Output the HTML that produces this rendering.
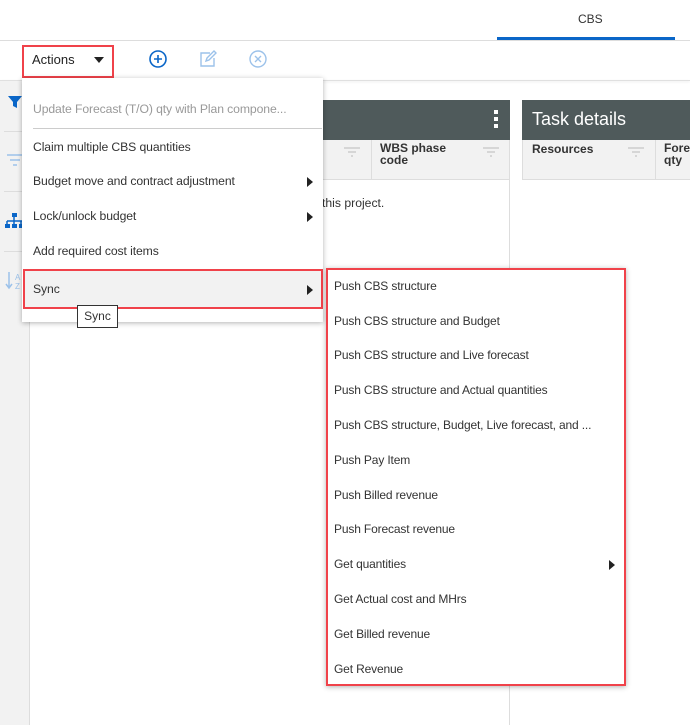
<!DOCTYPE html><html><head><style>
body{margin:0;width:690px;height:725px;overflow:hidden;background:#fff;font-family:"Liberation Sans",sans-serif;font-size:12px;color:#333;position:relative}
.a{position:absolute}
.mi{position:absolute;left:11px;font-size:12.2px;color:#333;letter-spacing:-0.1px}
.si{position:absolute;left:6px;font-size:12px;color:#333;letter-spacing:-0.15px}
.tri{position:absolute;width:0;height:0;border-top:5px solid transparent;border-bottom:5px solid transparent;border-left:6px solid #222}
</style></head><body>
<div class="a" style="left:0;top:40px;width:690px;height:1px;background:#ddd"></div>
<div class="a" style="left:578px;top:12px;font-size:12px">CBS</div>
<div class="a" style="left:497px;top:37px;width:178px;height:3px;background:#0a66c8"></div>
<div class="a" style="left:0;top:80px;width:690px;height:1px;background:#e0e0e0;box-shadow:0 1px 2px rgba(0,0,0,.1)"></div>
<div class="a" style="left:22px;top:45px;width:88px;height:29px;border:2px solid #f0424a"></div>
<div class="a" style="left:32px;top:52px;font-size:13px;color:#222">Actions</div>
<div class="a" style="left:94px;top:57px;border-left:5px solid transparent;border-right:5px solid transparent;border-top:6px solid #222"></div>
<svg class="a" style="left:148px;top:49px" width="20" height="20"><circle cx="10" cy="10" r="8" fill="none" stroke="#0a66c8" stroke-width="1.6"/><path d="M10 6v8M6 10h8" stroke="#0a66c8" stroke-width="1.6"/></svg>
<svg class="a" style="left:198px;top:49px" width="20" height="20"><path d="M12 4H3v13h13V9" fill="none" stroke="#9cc2ea" stroke-width="1.4"/><path d="M8 12l1-3 7-7 2 2-7 7z" fill="none" stroke="#9cc2ea" stroke-width="1.4"/></svg>
<svg class="a" style="left:248px;top:49px" width="20" height="20"><circle cx="10" cy="10" r="8" fill="none" stroke="#9cc2ea" stroke-width="1.4"/><path d="M7 7l6 6M13 7l-6 6" stroke="#9cc2ea" stroke-width="1.4"/></svg>
<div class="a" style="left:0;top:81px;width:29px;height:644px;background:#f2f2f2;border-right:1px solid #ddd"></div>
<svg class="a" style="left:7px;top:94px" width="16" height="16"><path d="M1 2h14l-5 6v6l-4-2V8z" fill="#0a66c8"/></svg>
<div class="a" style="left:4px;top:131px;width:22px;height:1px;background:#ddd"></div>
<svg class="a" style="left:5px;top:152px" width="20" height="16"><path d="M2 3h16M5 8h10M8 13h4" stroke="#9cc2ea" stroke-width="1.5"/></svg>
<div class="a" style="left:4px;top:191px;width:22px;height:1px;background:#ddd"></div>
<svg class="a" style="left:4px;top:212px" width="20" height="18"><rect x="8" y="1" width="5" height="4" fill="#0a66c8"/><path d="M10 5v4M3 9h15M3 9v3M10 9v3M17 9v3" stroke="#0a66c8" stroke-width="1.5" fill="none"/><rect x="1" y="12" width="5" height="4" fill="#0a66c8"/><rect x="8" y="12" width="5" height="4" fill="#0a66c8"/><rect x="15" y="12" width="4" height="4" fill="#0a66c8"/></svg>
<div class="a" style="left:4px;top:251px;width:22px;height:1px;background:#ddd"></div>
<svg class="a" style="left:4px;top:270px" width="22" height="22"><path d="M5 2v16M2 14l3 4 3-4" stroke="#9cc2ea" stroke-width="1.5" fill="none"/><text x="11" y="10" font-size="8" fill="#9cc2ea" font-family="Liberation Sans">A</text><text x="11" y="19" font-size="8" fill="#9cc2ea" font-family="Liberation Sans">Z</text></svg>
<div class="a" style="left:30px;top:100px;width:480px;height:40px;background:#4f5a5b"></div>
<div class="a" style="left:494px;top:110px;width:4px;height:4px;background:#fff;box-shadow:0 7px 0 #fff,0 14px 0 #fff"></div>
<div class="a" style="left:30px;top:140px;width:479px;height:39px;background:#f2f2f2;border-bottom:1px solid #ddd;border-right:1px solid #ddd"></div>
<div class="a" style="left:371px;top:140px;width:1px;height:40px;background:#ddd"></div>
<div class="a" style="left:380px;top:142px;font-weight:bold;font-size:12px;line-height:12px">WBS phase<br>code</div>
<svg class="a" style="left:343px;top:146px" width="18" height="12"><path d="M1 2h16M5 6h8M8 10h2" stroke="#ccc" stroke-width="1.5"/></svg>
<svg class="a" style="left:482px;top:146px" width="18" height="12"><path d="M1 2h16M5 6h8M8 10h2" stroke="#ccc" stroke-width="1.5"/></svg>
<div class="a" style="left:322px;top:196px;font-size:12.2px">this project.</div>
<div class="a" style="left:509px;top:180px;width:1px;height:545px;background:#ddd"></div>
<div class="a" style="left:522px;top:100px;width:168px;height:40px;background:#4f5a5b"></div>
<div class="a" style="left:532px;top:109px;color:#fff;font-size:18px">Task details</div>
<div class="a" style="left:522px;top:140px;width:168px;height:39px;background:#f2f2f2;border-bottom:1px solid #ddd;border-left:1px solid #ddd"></div>
<div class="a" style="left:655px;top:140px;width:1px;height:40px;background:#ddd"></div>
<div class="a" style="left:532px;top:142px;font-weight:bold;font-size:12px">Resources</div>
<div class="a" style="left:664px;top:142px;font-weight:bold;font-size:12px;line-height:12px;width:26px;overflow:hidden;white-space:nowrap">Forec<br>qty</div>
<svg class="a" style="left:627px;top:146px" width="18" height="12"><path d="M1 2h16M5 6h8M8 10h2" stroke="#ccc" stroke-width="1.5"/></svg>
<div class="a" style="left:22px;top:78px;width:301px;height:244px;background:#fff;box-shadow:0 1px 5px rgba(0,0,0,.3)">
<div class="mi" style="top:24px;color:#999">Update Forecast (T/O) qty with Plan compone...</div>
<div class="a" style="left:11px;top:50px;width:289px;height:1px;background:#ccc"></div>
<div class="mi" style="top:62px">Claim multiple CBS quantities</div>
<div class="mi" style="top:96px">Budget move and contract adjustment</div><div class="tri" style="left:285px;top:99px"></div>
<div class="mi" style="top:131px">Lock/unlock budget</div><div class="tri" style="left:285px;top:134px"></div>
<div class="mi" style="top:166px">Add required cost items</div>
<div class="a" style="left:1px;top:191px;width:296px;height:36px;background:#f2f2f2;border:2px solid #f0424a"></div>
<div class="mi" style="top:204px">Sync</div><div class="tri" style="left:285px;top:207px"></div>
</div>
<div class="a" style="left:77px;top:305px;width:39px;height:21px;border:1px solid #333;background:#fff;font-size:12px;text-align:center;line-height:21px">Sync</div>
<div class="a" style="left:326px;top:268px;width:296px;height:414px;background:#fff;border:2px solid #f0424a;box-shadow:0 1px 5px rgba(0,0,0,.3)">
<div class="si" style="top:9px">Push CBS structure</div>
<div class="si" style="top:44px">Push CBS structure and Budget</div>
<div class="si" style="top:78px">Push CBS structure and Live forecast</div>
<div class="si" style="top:113px">Push CBS structure and Actual quantities</div>
<div class="si" style="top:148px">Push CBS structure, Budget, Live forecast, and ...</div>
<div class="si" style="top:183px">Push Pay Item</div>
<div class="si" style="top:218px">Push Billed revenue</div>
<div class="si" style="top:252px">Push Forecast revenue</div>
<div class="si" style="top:287px">Get quantities</div><div class="tri" style="left:281px;top:290px"></div>
<div class="si" style="top:322px">Get Actual cost and MHrs</div>
<div class="si" style="top:357px">Get Billed revenue</div>
<div class="si" style="top:392px">Get Revenue</div>
</div>
</body></html>
